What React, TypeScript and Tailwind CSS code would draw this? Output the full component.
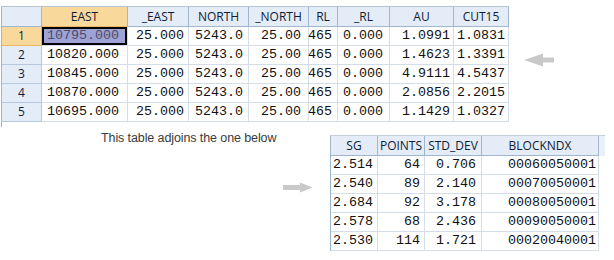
import React from "react";

const HDR = "font-['Open_Sans',sans-serif] text-[12px] text-[#101c36]";
const MONO = "font-['Liberation_Mono',monospace] text-[13.33px] text-[#111]";

const topCols = [
  { name: "EAST", w: "w-[86px]", pr: "pr-[8px]" },
  { name: "_EAST", w: "w-[61px]", pr: "pr-[4px]" },
  { name: "NORTH", w: "w-[60px]", pr: "pr-[5px]" },
  { name: "_NORTH", w: "w-[60px]", pr: "pr-[7px]" },
  { name: "RL", w: "w-[29px]", pr: "pr-[5px]" },
  { name: "_RL", w: "w-[52px]", pr: "pr-[6px]" },
  { name: "AU", w: "w-[64px]", pr: "pr-[3px]" },
  { name: "CUT15", w: "w-[55px]", pr: "pr-[3px]" },
];

const topRows = [
  ["10795.000", "25.000", "5243.0", "25.00", "465", "0.000", "1.0991", "1.0831"],
  ["10820.000", "25.000", "5243.0", "25.00", "465", "0.000", "1.4623", "1.3391"],
  ["10845.000", "25.000", "5243.0", "25.00", "465", "0.000", "4.9111", "4.5437"],
  ["10870.000", "25.000", "5243.0", "25.00", "465", "0.000", "2.0856", "2.2015"],
  ["10695.000", "25.000", "5243.0", "25.00", "465", "0.000", "1.1429", "1.0327"],
];

const botCols = [
  { name: "SG", w: "w-[47px]", pr: "pr-[4px]" },
  { name: "POINTS", w: "w-[47px]", pr: "pr-[4px]" },
  { name: "STD_DEV", w: "w-[57px]", pr: "pr-[5px]" },
  { name: "BLOCKNDX", w: "w-[117px]", pr: "pr-[2px]" },
];

const botRows = [
  ["2.514", "64", "0.706", "00060050001"],
  ["2.540", "89", "2.140", "00070050001"],
  ["2.684", "92", "3.178", "00080050001"],
  ["2.578", "68", "2.436", "00090050001"],
  ["2.530", "114", "1.721", "00020040001"],
];

function TopTable() {
  return (
    <div className="flex flex-col ml-[1px] mt-[6px] border-t border-[#b8c2d0]">
      <div className="flex h-[20px] border-l border-[#9eb6ce]">
        <div className="w-[40px] h-full bg-[#e4ecf7] border-r border-b border-[#9eb6ce]" />
        {topCols.map((c, i) => (
          <div
            key={c.name}
            className={`${c.w} h-full flex items-center justify-center border-r border-b border-[#9eb6ce] ${HDR} ${
              i === 0 ? "bg-[#f9d89c] border-b-[#e9b965]" : "bg-[#e4ecf7]"
            }`}
          >
            {c.name}
          </div>
        ))}
      </div>
      {topRows.map((r, ri) => (
        <div key={ri} className="flex h-[19px] border-l border-[#9eb6ce]">
          <div
            className={`w-[40px] h-full flex items-center justify-center border-r border-b ${HDR} text-[12.5px] ${
              ri === 0 ? "bg-[#f9d89c] border-[#e9b965]" : "bg-[#e4ecf7] border-[#b7c8de]"
            }`}
          >
            {ri + 1}
          </div>
          {r.map((v, ci) => {
            const sel = ri === 0 && ci === 0;
            return (
              <div
                key={ci}
                className={`${topCols[ci].w} h-full flex items-center justify-end ${topCols[ci].pr} border-r border-b border-[#d5dde8] ${MONO} ${
                  sel ? "bg-[#9ea2d4] !text-[#4c4c6c] shadow-[inset_0_0_0_2px_#000]" : "bg-white"
                }`}
              >
                {v}
              </div>
            );
          })}
        </div>
      ))}
      <div className="flex h-[5px] border-l border-[#9eb6ce]">
        <div className="w-[40px] h-full" />
      </div>
    </div>
  );
}

function BottomTable() {
  return (
    <div className="flex flex-col mt-[13px]">
      <div className="flex h-[21px] border-t border-[#c6d0dd]">
        <div className="flex border-l border-[#9eb6ce]">
          {botCols.map((c) => (
            <div
              key={c.name}
              className={`${c.w} h-[20px] flex items-center justify-center bg-[#e4ecf7] border-r border-b border-[#9eb6ce] ${HDR}`}
            >
              {c.name}
            </div>
          ))}
        </div>
        <div className="w-[6px] h-[20px] bg-[#eaf0f8]" />
      </div>
      {botRows.map((r, ri) => (
        <div key={ri} className="flex h-[19px] border-l border-[#9eb6ce] w-fit">
          {r.map((v, ci) => (
            <div
              key={ci}
              className={`${botCols[ci].w} h-full flex items-center justify-end ${botCols[ci].pr} border-r border-b border-[#d5dde8] bg-white ${MONO}`}
            >
              {v}
            </div>
          ))}
        </div>
      ))}
    </div>
  );
}

export default function App() {
  return (
    <div className="w-[614px] h-[260px] bg-white overflow-hidden flex flex-col">
      <div className="flex items-start h-[122px]">
        <TopTable />
        <svg className="ml-[15px] mt-[53px]" width="31" height="14" viewBox="0 0 31 14">
          <polygon points="0,7 19,0.5 19,4.5 30,4.5 30,9.5 19,9.5 19,13.5" fill="#c9c9c9" />
        </svg>
      </div>
      <div className="flex items-start">
        <div className="w-[330px] flex flex-col">
          <div className="pl-[101px] pt-[9px] font-['Liberation_Sans',Arial,sans-serif] text-[12.5px] leading-[15px] text-[#3a3a3a] tracking-[-0.1px]">
            This table adjoins the one below
          </div>
          <svg className="ml-[283px] mt-[36px]" width="30" height="11" viewBox="0 0 30 11">
            <polygon points="29.5,5.5 17,0.5 17,3 0,3 0,8 17,8 17,10.5" fill="#c9c9c9" />
          </svg>
        </div>
        <BottomTable />
      </div>
    </div>
  );
}
